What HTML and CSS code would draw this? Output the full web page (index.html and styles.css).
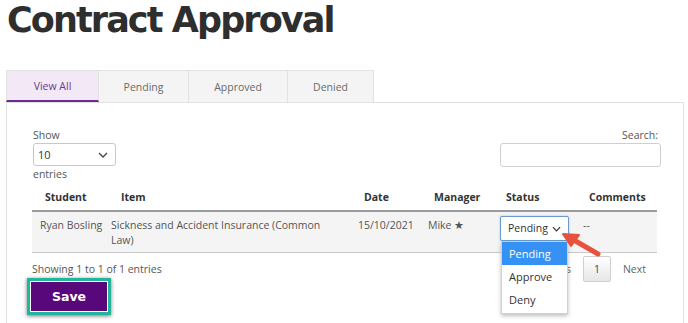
FILE: index.html
```html
<!DOCTYPE html>
<html>
<head>
<meta charset="utf-8">
<link rel="stylesheet" href="styles.css">
</head>
<body>
<h1 class="title">Contract Approval</h1>
<div class="tabs">
  <div class="tab active">View All</div>
  <div class="tab t2">Pending</div>
  <div class="tab t3">Approved</div>
  <div class="tab t4">Denied</div>
</div>
<div class="panel">
  <div class="controls">
    <div class="length">
      <div class="lbl">Show</div>
      <div class="select small"><span>10</span><svg class="chev" width="10" height="6" viewBox="0 0 10 6"><path d="M1 1l4 4 4-4" fill="none" stroke="#444" stroke-width="1.3"/></svg></div>
      <div class="lbl">entries</div>
    </div>
    <div class="search">
      <div class="lbl">Search:</div>
      <div class="input"></div>
    </div>
  </div>
  <div class="table">
    <div class="th c1">Student</div>
    <div class="th c2">Item</div>
    <div class="th">Date</div>
    <div class="th">Manager</div>
    <div class="th">Status</div>
    <div class="th">Comments</div>
    <div class="td name">Ryan Bosling</div>
    <div class="td item">Sickness and Accident Insurance (Common Law)</div>
    <div class="td">15/10/2021</div>
    <div class="td">Mike ★</div>
    <div class="td status">
      <div class="select status-sel"><span>Pending</span><svg class="chev" width="9" height="6" viewBox="0 0 10 6"><path d="M1 1l4 4 4-4" fill="none" stroke="#333" stroke-width="1.3"/></svg></div>
      <ul class="menu">
        <li class="sel">Pending</li>
        <li>Approve</li>
        <li>Deny</li>
      </ul>
      <svg class="arrow" width="44" height="30" viewBox="0 0 44 30"><path d="M38 24 L12 9" stroke="#e8523c" stroke-width="5" stroke-linecap="round"/><path d="M3 4 L19 5 L11 16 Z" fill="#e8523c" stroke="#e8523c" stroke-width="2" stroke-linejoin="round"/></svg>
    </div>
    <div class="td">--</div>
  </div>
  <div class="footer">
    <div class="info">Showing 1 to 1 of 1 entries</div>
    <div class="paging">
      <span class="pbtn">Previous</span>
      <span class="pnum">1</span>
      <span class="pbtn">Next</span>
    </div>
  </div>
  <div class="save-wrap"><button class="save">Save</button></div>
</div>
</body>
</html>
```
FILE: styles.css
```css
* { box-sizing: border-box; }
body {
  margin: 0;
  width: 688px;
  height: 323px;
  overflow: hidden;
  background: #fff;
  font-family: "Open Sans", "Liberation Sans", sans-serif;
  font-size: 10.5px;
  color: #555;
}
.title {
  margin: 0;
  padding: 0 0 0 7px;
  height: 70px;
  font-family: "DejaVu Sans", sans-serif;
  font-weight: 700;
  font-size: 35px;
  line-height: 40px;
  color: #2e2e2e;
  letter-spacing: -1.9px;
}
.tabs {
  display: flex;
  margin-left: 6px;
  height: 32px;
}
.tab {
  display: flex;
  align-items: center;
  justify-content: center;
  background: #f4f4f4;
  border: 1px solid #e2e2e2;
  border-left: none;
  border-bottom: none;
  color: #6a6a6a;
  font-size: 10.5px;
}
.tab.active {
  width: 93px;
  border-left: 1px solid #e2e2e2;
  background: #f3e9f6;
  color: #6b3a8c;
  border-bottom: 2px solid #6b2a8f;
}
.t2 { width: 90px; }
.t3 { width: 99px; }
.t4 { width: 86px; }
.panel {
  margin-left: 6px;
  width: 678px;
  height: 230px;
  border: 1px solid #e2e2e2;
  border-bottom: none;
  padding: 24px 25px 0 26px;
  position: relative;
}
.controls {
  display: flex;
  justify-content: space-between;
}
.lbl { line-height: 16px; }
.length { display: flex; flex-direction: column; }
.select {
  display: flex;
  align-items: center;
  justify-content: space-between;
  border: 1px solid #c8c8c8;
  border-radius: 3px;
  background: #fff;
  color: #333;
}
.select.small {
  width: 83px;
  height: 23px;
  padding: 0 7px 0 4px;
  font-size: 11px;
}
.search { display: flex; flex-direction: column; align-items: flex-end; }
.input {
  width: 161px;
  height: 24px;
  margin-right: -3px;
  border: 1px solid #cfcfcf;
  border-radius: 3px;
}
.table {
  display: grid;
  grid-template-columns: 71px 247px 70px 72px 83px 82px;
  width: 625px;
  margin-left: -1px;
}
.th {
  font-weight: 700;
  color: #333;
  height: 30px;
  line-height: 30px;
  padding-left: 14px;
  border-bottom: 2px solid #9a9a9a;
  white-space: nowrap;
}
.th.c1 { padding-left: 13px; }
.th.c2 { padding-left: 18px; }
.td {
  background: #f4f4f4;
  padding: 6px 8px 5px 8px;
  line-height: 15px;
  height: 41px;
  border-bottom: 1px solid #c9c9c9;
  color: #555;
}
.td.name { padding-right: 0; white-space: nowrap; }
.td.item { padding-right: 26px; }
.td.status { padding: 4px 0 0 8px; position: relative; }
.status-sel {
  width: 69px;
  height: 25px;
  border: 1px solid #6a9ad0;
  border-radius: 2px;
  padding: 0 7px 0 7px;
  font-size: 10.5px;
  box-shadow: 0 0 2px rgba(80,140,210,0.5);
}
.menu {
  position: absolute;
  left: 9px;
  top: 29px;
  width: 67px;
  margin: 0;
  padding: 0 0 2px 0;
  list-style: none;
  background: #fff;
  border: 1px solid #d0d0d0;
  box-shadow: 0 2px 4px rgba(0,0,0,0.25);
  z-index: 3;
  font-size: 11px;
  color: #333;
}
.menu li {
  height: 23px;
  line-height: 23px;
  padding-left: 7px;
}
.menu li.sel { background: #3592f4; color: #fff; }
.arrow {
  position: absolute;
  left: 68px;
  top: 18px;
  z-index: 4;
}
.footer {
  display: flex;
  justify-content: space-between;
  align-items: center;
  height: 31px;
  margin-left: -1px;
}
.paging { display: flex; align-items: center; padding-right: 0px; }
.pbtn { color: #666; padding: 0 12px; }
.pnum {
  width: 28px;
  height: 26px;
  display: flex;
  align-items: center;
  justify-content: center;
  border: 1px solid #cfcfcf;
  border-radius: 2px;
  background: linear-gradient(#fff, #e6e6e6);
  color: #444;
}
.save-wrap {
  display: inline-block;
  margin: -6px 0 0 -6px;
  border: 3px solid #22b59c;
  padding: 1px;
  background: #fff;
  box-shadow: 0 1px 4px rgba(0,0,0,0.55);
}
.save {
  display: block;
  width: 76px;
  height: 29px;
  border: none;
  background: #58087a;
  color: #fff;
  font-family: "DejaVu Sans", sans-serif;
  font-weight: 700;
  font-size: 12.5px;
  padding: 0;
}
```
